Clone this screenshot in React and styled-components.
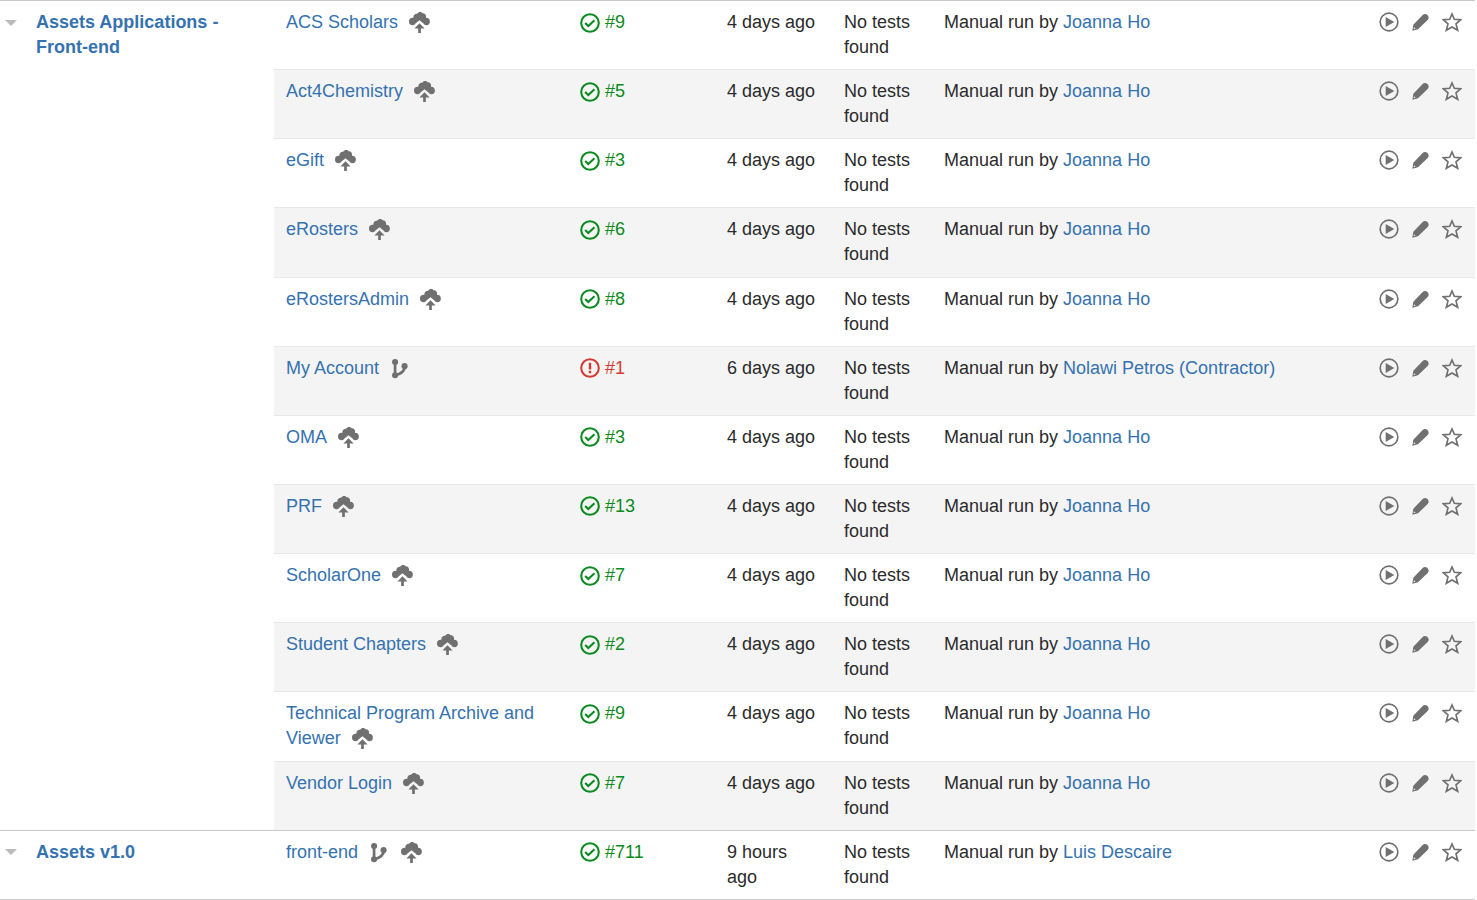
import React, { useState } from "react";
import styled, { createGlobalStyle } from "styled-components";

const run = (plan, build, options = {}) => ({
  plan,
  build,
  icons: ["deploy"],
  when: "4 days ago",
  user: "Joanna Ho",
  ...options,
});

const projects = [
  {
    name: "Assets Applications - Front-end",
    plans: [
      run("ACS Scholars", 9),
      run("Act4Chemistry", 5),
      run("eGift", 3),
      run("eRosters", 6),
      run("eRostersAdmin", 8),
      run("My Account", 1, {
        icons: ["branch"],
        failed: true,
        when: "6 days ago",
        user: "Nolawi Petros (Contractor)",
      }),
      run("OMA", 3),
      run("PRF", 13),
      run("ScholarOne", 7),
      run("Student Chapters", 2),
      run("Technical Program Archive and Viewer", 9),
      run("Vendor Login", 7),
    ],
  },
  {
    name: "Assets v1.0",
    plans: [
      run("front-end", 711, {
        icons: ["branch", "deploy"],
        when: "9 hours ago",
        user: "Luis Descaire",
      }),
    ],
  },
];

const DeployIcon = () => (
  <PlanIcon viewBox="0 0 62 62" aria-hidden="true">
    <path d="M11 39A11 11 0 0 1 11 17H13C12 9 18 4 24 5C28 -1 37 -1 40 4C47 3 52 9 50 17A11 11 0 0 1 51 39C47 39 45 37 43 34L31 24L19 34C17 37 15 39 11 39Z" />
    <path d="M31 33L46 49H35V62H27V49H16Z" />
  </PlanIcon>
);

const BranchIcon = () => (
  <PlanIcon viewBox="-6 -3 62 62" aria-hidden="true">
    <circle cx="9" cy="9" r="9" />
    <circle cx="9" cy="48" r="9" />
    <circle cx="37" cy="21" r="9" />
    <path d="M9 9V48C25 45 37 36 38 21" fill="none" stroke="currentColor" strokeWidth="8" />
  </PlanIcon>
);

const SuccessIcon = () => (
  <StatusIcon viewBox="0 0 58 58" aria-hidden="true">
    <circle cx="29" cy="29" r="25.5" strokeWidth="6" />
    <path d="M15 29L24 38L42 21" strokeWidth="6" />
  </StatusIcon>
);

const FailedIcon = () => (
  <StatusIcon viewBox="0 0 58 58" aria-hidden="true">
    <circle cx="29" cy="29" r="25.5" strokeWidth="6" />
    <path d="M29 14V33M29 37V44" strokeWidth="7" />
  </StatusIcon>
);

const PlayIcon = () => (
  <svg width="20" height="20" viewBox="0 0 60 60" aria-hidden="true">
    <circle cx="30" cy="30" r="26.5" fill="none" stroke="currentColor" strokeWidth="5" />
    <path d="M20 15L46 30L20 45Z" fill="currentColor" />
  </svg>
);

const PencilIcon = () => (
  <svg width="17" height="18" viewBox="0 0 51 54" aria-hidden="true">
    <path
      d="M1 53L4 35L32 6C40 -3 57 10 47 21L18 49ZM6 43L5 48L11 47Z"
      fill="currentColor"
      fillRule="evenodd"
    />
  </svg>
);

const StarIcon = () => (
  <svg width="20" height="20" viewBox="0 0 60 60" aria-hidden="true">
    <path
      d="M30 6L37 22L56 23.500L42 35.500L47 55L30 45L13 55L18 35.500L4 23.500L23 22Z"
      fill="none"
      stroke="currentColor"
      strokeWidth="5"
    />
  </svg>
);

const planIcons = {
  deploy: DeployIcon,
  branch: BranchIcon,
};

const PlanCells = ({ item }) => {
  const [starred, setStarred] = useState(false);

  return (
    <>
      <Cell>
        <Link href="#plan">{item.plan}</Link>
        {item.icons.map((name) => {
          const Icon = planIcons[name];
          return <Icon key={name} />;
        })}
      </Cell>
      <Cell>
        <BuildLink href="#build" $failed={item.failed}>
          {item.failed ? <FailedIcon /> : <SuccessIcon />}#{item.build}
        </BuildLink>
      </Cell>
      <Cell>{item.when}</Cell>
      <Cell>No tests found</Cell>
      <Cell>
        Manual run by <Link href="#user">{item.user}</Link>
      </Cell>
      <Cell>
        <Actions>
          <IconButton aria-label={`Run ${item.plan}`}>
            <PlayIcon />
          </IconButton>
          <IconLink href="#edit" aria-label={`Edit ${item.plan}`}>
            <PencilIcon />
          </IconLink>
          <IconButton
            aria-label={`Favourite ${item.plan}`}
            aria-pressed={starred}
            onClick={() => setStarred(!starred)}
          >
            <StarIcon />
          </IconButton>
        </Actions>
      </Cell>
    </>
  );
};

const Project = ({ project }) => {
  const [open, setOpen] = useState(true);
  const plans = open ? project.plans : [];

  return (
    <ProjectBody>
      <tr>
        <ProjectCell scope="rowgroup" rowSpan={plans.length || 1}>
          <ProjectTitle>
            <Toggle
              aria-label={`Toggle ${project.name}`}
              aria-expanded={open}
              onClick={() => setOpen(!open)}
            >
              <svg width="12" height="6" viewBox="0 0 12 6" aria-hidden="true">
                <path d="M0 0H12L6 6Z" fill="#bbb" />
              </svg>
            </Toggle>
            <Link href="#project">{project.name}</Link>
          </ProjectTitle>
        </ProjectCell>
        {open ? <PlanCells item={plans[0]} /> : <Cell colSpan={6} />}
      </tr>
      {plans.slice(1).map((item) => (
        <tr key={item.plan}>
          <PlanCells item={item} />
        </tr>
      ))}
    </ProjectBody>
  );
};

const App = () => (
  <>
    <GlobalStyle />
    <Page>
      <Table>
        <colgroup>
          <Column $width="274px" />
          <Column $width="294px" />
          <Column $width="147px" />
          <Column $width="117px" />
          <Column $width="100px" />
          <Column />
          <Column $width="108px" />
        </colgroup>
        {projects.map((project) => (
          <Project key={project.name} project={project} />
        ))}
      </Table>
    </Page>
  </>
);

const GlobalStyle = createGlobalStyle`
  body {
    margin: 0;
    background: #fff;
    color: #2b2b2b;
    font-family: "Liberation Sans", Arial, sans-serif;
    font-size: 18px;
    line-height: 25px;
  }
`;

const Page = styled.main`
  padding-right: 2px;
`;

const Table = styled.table`
  width: 100%;
  height: 100vh;
  table-layout: fixed;
  border-spacing: 0;
  border-bottom: 1px solid #ccc;
`;

const Column = styled.col`
  width: ${(props) => props.$width || "auto"};
`;

const Cell = styled.td`
  padding: 9px 12px;
  border-top: 1px solid #e8e8e8;
  vertical-align: top;

  &:last-child {
    padding-right: 13px;
    padding-left: 0;
  }
`;

const ProjectCell = styled.th`
  padding: 9px 12px 9px 5px;
  vertical-align: top;
  text-align: left;
`;

const ProjectBody = styled.tbody`
  tr:nth-child(even) {
    background: #f4f4f4;
  }

  tr:first-child > * {
    border-top: 1px solid #c8c8c8;
  }
`;

const ProjectTitle = styled.div`
  display: flex;
  align-items: flex-start;
  gap: 19px;
`;

const Toggle = styled.button`
  display: flex;
  align-items: center;
  height: 25px;
  padding: 0;
  border: none;
  background: none;
  cursor: pointer;
`;

const Link = styled.a`
  color: #3572b0;
  text-decoration: none;

  &:hover {
    text-decoration: underline;
  }
`;

const BuildLink = styled(Link)`
  display: flex;
  align-items: center;
  gap: 5px;
  color: ${(props) => (props.$failed ? "#d5392f" : "#0b8a20")};
`;

const StatusIcon = styled.svg`
  width: 20px;
  height: 20px;
  fill: none;
  stroke: currentColor;
`;

const PlanIcon = styled.svg`
  width: 21px;
  height: 21px;
  margin-left: 11px;
  vertical-align: -5px;
  color: #707070;
  fill: currentColor;
`;

const Actions = styled.div`
  display: flex;
  align-items: center;
  justify-content: flex-end;
  gap: 13px;
  height: 24px;
`;

const IconButton = styled.button`
  display: flex;
  padding: 0;
  border: none;
  background: none;
  color: #707070;
  cursor: pointer;
`;

const IconLink = styled.a`
  display: flex;
  color: #707070;
`;

export default App;
